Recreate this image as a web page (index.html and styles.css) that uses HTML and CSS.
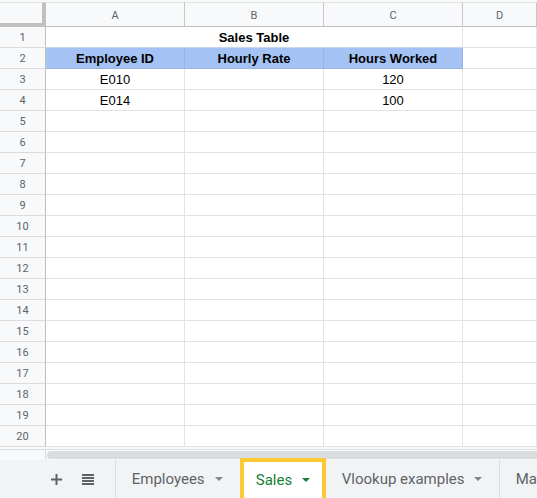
FILE: index.html
```html
<!DOCTYPE html>
<html lang="en">
    <head>
        <meta charset="UTF-8" />
        <meta name="viewport" content="width=device-width, initial-scale=1.0" />
        <title>Sales - Sheet</title>
        <link rel="stylesheet" href="styles.css">
    </head>
    <body>
        <div class="sheet">
            <div class="grid" id="grid">
                <div class="corner"></div>
                <div class="col-head">A</div>
                <div class="col-head">B</div>
                <div class="col-head">C</div>
                <div class="col-head">D</div>

                <div class="row-head">1</div>
                <div class="cell merged bold">Sales Table</div>
                <div class="cell"></div>

                <div class="row-head">2</div>
                <div class="cell head bold">Employee ID</div>
                <div class="cell head bold">Hourly Rate</div>
                <div class="cell head bold">Hours Worked</div>
                <div class="cell"></div>

                <div class="row-head">3</div>
                <div class="cell">E010</div>
                <div class="cell"></div>
                <div class="cell">120</div>
                <div class="cell"></div>

                <div class="row-head">4</div>
                <div class="cell">E014</div>
                <div class="cell"></div>
                <div class="cell">100</div>
                <div class="cell"></div>
            </div>

            <div class="hscroll">
                <div class="hscroll-corner"></div>
                <div class="hscroll-thumb"></div>
            </div>
        </div>

        <div class="tab-bar">
            <div class="tools">
                <button class="tool" title="Add sheet">
                    <svg width="11" height="11" viewBox="0 0 11 11">
                        <path d="M4.5 0h2v4.5H11v2H6.5V11h-2V6.5H0v-2h4.5z" fill="#5f6368" />
                    </svg>
                </button>
                <button class="tool" title="All sheets">
                    <svg width="12" height="11" viewBox="0 0 12 11">
                        <path d="M0 0h12v2H0zM0 3h12v2H0zM0 6h12v2H0zM0 9h12v2H0z" fill="#5f6368" />
                    </svg>
                </button>
            </div>
            <div class="tab tab-employees">Employees <span class="caret"></span></div>
            <div class="tab tab-active">Sales <span class="caret"></span></div>
            <div class="tab tab-vlookup">Vlookup examples <span class="caret"></span></div>
            <div class="tab tab-more">Ma</div>
        </div>

        <script>
            // empty rows 5..20
            const grid = document.getElementById("grid");
            for (let r = 5; r <= 20; r++) {
                const head = document.createElement("div");
                head.className = "row-head";
                head.textContent = r;
                grid.appendChild(head);
                for (let c = 0; c < 4; c++) {
                    const cell = document.createElement("div");
                    cell.className = "cell";
                    grid.appendChild(cell);
                }
            }
        </script>
    </body>
</html>
```

FILE: styles.css
```css
body {
    margin: 0;
    width: 537px;
    height: 498px;
    overflow: hidden;
    background-color: #ffffff;
    font-family: "Liberation Sans", Arial, sans-serif;
}
.sheet {
    padding-top: 2px;
    background-color: #f8f9fa;
}
.grid {
    display: grid;
    grid-template-columns: 46px 139px 139px 139px 1fr;
    grid-template-rows: 25px;
    grid-auto-rows: 21px;
    background-color: #ffffff;
}
.corner {
    box-sizing: border-box;
    background-color: #f8f9fa;
    border-top: 1px solid #e2e3e3;
    border-right: 4px solid #c0c0c0;
    border-bottom: 4px solid #c0c0c0;
}
.col-head {
    box-sizing: border-box;
    display: flex;
    align-items: center;
    justify-content: center;
    background-color: #f8f9fa;
    border-top: 1px solid #e2e3e3;
    border-right: 1px solid #c7c7c7;
    border-bottom: 1px solid #c0c0c0;
    color: #5f6368;
    font-family: Roboto, Arial, sans-serif;
    font-size: 11px;
    padding-top: 1px;
}
.row-head {
    box-sizing: border-box;
    display: flex;
    align-items: center;
    justify-content: center;
    background-color: #f8f9fa;
    border-right: 1px solid #c0c0c0;
    border-bottom: 1px solid #dcdcdc;
    color: #5f6368;
    font-family: Roboto, Arial, sans-serif;
    font-size: 11px;
}
.cell {
    box-sizing: border-box;
    display: flex;
    align-items: center;
    justify-content: center;
    border-right: 1px solid #e2e3e3;
    border-bottom: 1px solid #e2e3e3;
    color: #000000;
    font-size: 13px;
    white-space: nowrap;
}
.merged {
    grid-column: span 3;
    border-bottom-color: #c9d6ec;
}
.bold {
    font-weight: bold;
}
.head {
    background-color: #a4c2f4;
    border-right-color: #97b4e6;
    border-bottom-color: #9cb3dc;
}
.hscroll {
    display: flex;
    height: 10px;
    margin-top: 2px;
    border-top: 1px solid #dadce0;
    background-color: #f8f9fa;
}
.hscroll-corner {
    width: 45px;
    border-right: 1px solid #dadce0;
}
.hscroll-thumb {
    flex: 1;
    margin: 1px -10px 1px 1px;
    border-radius: 5px;
    background-color: #dadce0;
}
.tab-bar {
    display: flex;
    height: 38px;
    background-color: #f1f3f4;
    font-family: Roboto, Arial, sans-serif;
    font-size: 15px;
    color: #5f6368;
    white-space: nowrap;
}
.tools {
    box-sizing: border-box;
    width: 117px;
    display: flex;
    align-items: center;
    padding-left: 41px;
    border-right: 1px solid #dadce0;
}
.tool {
    width: 31px;
    height: 30px;
    padding: 0;
    border: none;
    background: none;
    display: flex;
    align-items: center;
    justify-content: center;
    cursor: pointer;
}
.tab {
    box-sizing: border-box;
    flex-shrink: 0;
    display: flex;
    align-items: center;
    gap: 10px;
}
.caret {
    width: 0;
    height: 0;
    border-left: 4px solid transparent;
    border-right: 4px solid transparent;
    border-top: 4px solid #80868b;
}
.tab-employees {
    width: 128px;
    padding-left: 16px;
}
.tab-active {
    margin-top: 2px;
    width: 78px;
    padding-left: 12px;
    background-color: #ffffff;
    color: #188038;
    outline: 4px solid #fbc934;
    gap: 10px;
}
.tab-active .caret {
    border-top-color: #188038;
}
.tab-vlookup {
    width: 178px;
    padding-left: 20px;
    border-right: 1px solid #dadce0;
    gap: 9px;
}
.tab-more {
    padding-left: 16px;
}
```
